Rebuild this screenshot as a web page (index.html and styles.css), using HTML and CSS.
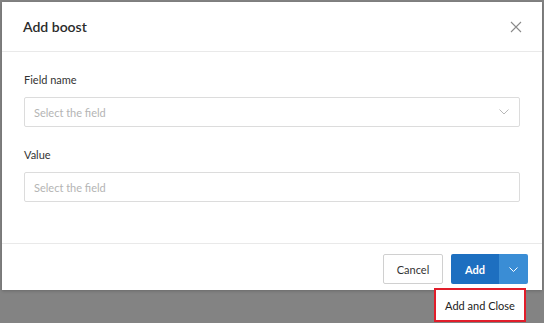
FILE: index.html
```html
<!DOCTYPE html>
<html>
<head>
	<title>Add boost</title>
	<link rel="stylesheet" href="styles.css">
</head>
<body>
	<div class="modal">
		<div class="modal_header">
			<h3>Add boost</h3>
			<span class="btn_close">
				<svg width="12" height="12" viewBox="0 0 12 12"><path d="M1 1L11 11M11 1L1 11" stroke="#8a8a8a" stroke-width="1.1" fill="none"/></svg>
			</span>
		</div>
		<div class="modal_body">
			<label>Field name</label>
			<div class="field select">
				<span class="placeholder">Select the field</span>
				<svg width="10" height="6" viewBox="0 0 10 6"><path d="M0.5 0.5L5 5L9.5 0.5" stroke="#b8b8b8" stroke-width="1" fill="none"/></svg>
			</div>
			<label>Value</label>
			<div class="field">
				<span class="placeholder">Select the field</span>
			</div>
		</div>
		<div class="modal_footer">
			<button class="btn_cancel">Cancel</button>
			<div class="split">
				<button class="btn_add">Add</button>
				<button class="btn_caret">
					<svg width="9" height="5" viewBox="0 0 9 5"><path d="M0.5 0.5L4.5 4.5L8.5 0.5" stroke="#ffffff" stroke-width="1" fill="none"/></svg>
				</button>
				<div class="menu">Add and Close</div>
			</div>
		</div>
	</div>
</body>
</html>
```

FILE: styles.css
```css
body {
	margin: 0;
	padding: 2px;
	height: 323px;
	box-sizing: border-box;
	background-color: #838383;
	font-family: Lato, "Noto Sans", sans-serif;
	color: #333;
}

.modal {
	width: 540px;
	height: 288px;
	background-color: #fff;
	display: flex;
	flex-direction: column;
	box-shadow: 0 1px 3px rgba(0,0,0,0.2);
}

.modal_header {
	height: 49px;
	display: flex;
	align-items: center;
	justify-content: space-between;
	padding: 0 20px 0 21px;
	border-bottom: 1px solid #e9e9e9;
}
.modal_header h3 {
	margin: 0;
	font-size: 14px;
	font-weight: 600;
	color: #2b2b2b;
}
.btn_close {
	display: flex;
	margin-top: 1px;
}

.modal_body {
	flex: 1;
	padding: 20px 22px 0 22px;
	border-bottom: 1px solid #e9e9e9;
}
label {
	display: block;
	font-size: 11px;
	line-height: 16px;
	color: #333;
	margin-bottom: 9px;
}
.field {
	height: 28px;
	border: 1px solid #dcdcdc;
	border-radius: 2px;
	display: flex;
	align-items: center;
	justify-content: space-between;
	padding: 0 10px 0 9px;
	margin-bottom: 20px;
}
.placeholder {
	font-size: 11px;
	color: #b4b4b4;
}

.modal_footer {
	height: 46px;
	box-sizing: border-box;
	display: flex;
	justify-content: flex-end;
	align-items: flex-start;
	padding: 10px 14px 0 0;
	gap: 8px;
}
button {
	font-family: inherit;
	font-size: 11px;
	height: 30px;
	border-radius: 2px;
	cursor: pointer;
}
.btn_cancel {
	width: 60px;
	background-color: #fff;
	border: 1px solid #d0d0d0;
	color: #333;
}
.split {
	display: flex;
	position: relative;
}
.btn_add {
	width: 48px;
	border: none;
	border-radius: 2px 0 0 2px;
	background-color: #1d6fc0;
	color: #fff;
	font-weight: 700;
}
.btn_caret {
	width: 29px;
	border: none;
	border-radius: 0 2px 2px 0;
	background-color: #3a8dd5;
	display: flex;
	align-items: center;
	justify-content: center;
	padding: 0;
}
.menu {
	position: absolute;
	top: 34px;
	left: -17px;
	width: 88px;
	height: 30px;
	border: 2px solid #e11d2a;
	background-color: #fff;
	font-size: 11px;
	color: #222;
	display: flex;
	align-items: center;
	justify-content: center;
}
```
